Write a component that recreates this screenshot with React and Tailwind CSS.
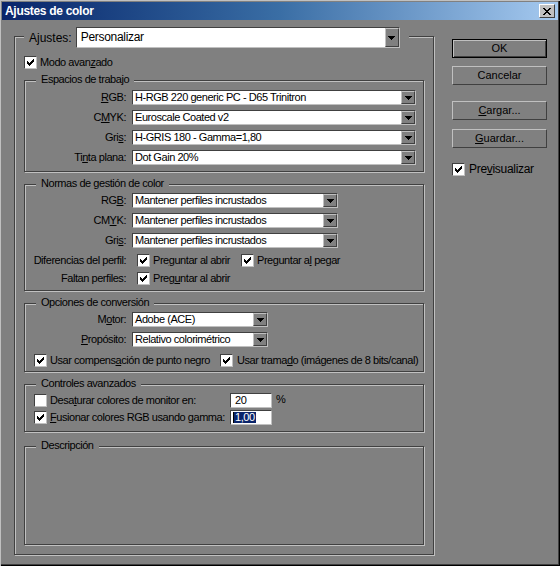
import React from 'react';

const sunken =
  'border border-t-[#404040] border-l-[#404040] border-b-[#c0c0c0] border-r-[#c0c0c0]';
const raised =
  'border border-t-[#c0c0c0] border-l-[#c0c0c0] border-b-[#404040] border-r-[#404040]';
const frame =
  'relative border border-[#404040] shadow-[inset_1px_1px_0_#c0c0c0,1px_1px_0_#c0c0c0]';

function Tri() {
  return (
    <svg width="7" height="4" viewBox="0 0 7 4" shapeRendering="crispEdges">
      <path d="M0 0H7V1H6V2H5V3H4V4H3V3H2V2H1V1H0Z" fill="#000" />
    </svg>
  );
}

function Arrow() {
  return (
    <div className={`${raised} bg-[#808080] w-[14px] h-full flex items-center justify-center shrink-0`}>
      <Tri />
    </div>
  );
}

function Select({ className, text }) {
  return (
    <div className={`${sunken} bg-white flex items-stretch h-[15px] ${className}`}>
      <div className="flex-1 pl-[2px] leading-[13px] whitespace-nowrap overflow-hidden">{text}</div>
      <Arrow />
    </div>
  );
}

function Check({ checked = true }) {
  return (
    <span className={`${sunken} bg-white w-[13px] h-[13px] shrink-0 flex items-center justify-center`}>
      {checked && (
        <svg width="7" height="7" viewBox="0 0 7 7" shapeRendering="crispEdges">
          <path
            d="M0 2h1v3h-1z M1 3h1v3h-1z M2 4h1v3h-1z M3 3h1v3h-1z M4 2h1v3h-1z M5 1h1v3h-1z M6 0h1v3h-1z"
            fill="#000"
          />
        </svg>
      )}
    </span>
  );
}

function Group({ title, className, children }) {
  return (
    <div className={`${frame} ${className}`}>
      <span className="absolute left-[11px] top-[-8px] px-[5px] bg-[#808080] leading-[13px] whitespace-nowrap">
        {title}
      </span>
      {children}
    </div>
  );
}

function Row({ label, children, className = '' }) {
  return (
    <div className={`flex items-center ${className}`}>
      <div className="w-[101px] text-right whitespace-nowrap leading-[13px]">{label}</div>
      {children}
    </div>
  );
}

function Button({ children, def, className = '' }) {
  return (
    <div
      className={`w-[95px] h-[19px] ${
        def
          ? 'border border-black shadow-[inset_1px_1px_0_#c0c0c0,inset_-1px_-1px_0_#404040]'
          : raised
      } flex items-center justify-center tracking-normal leading-[13px] ${className}`}
    >
      {children}
    </div>
  );
}

export default function App() {
  return (
    <div className="w-[560px] h-[566px] bg-[#808080] p-[2px] flex flex-col text-black text-[11px] tracking-[-0.45px] font-['Liberation_Sans',Arial,sans-serif] shadow-[inset_1px_1px_0_#c0c0c0,inset_-1px_-1px_0_#000,inset_-2px_-2px_0_#404040]">
      {/* Title bar */}
      <div className="h-[18px] flex items-center justify-between pl-[3px] pr-[3px] bg-linear-to-r from-[#0a246a] via-[#3a6ea5] to-[#a6caf0]">
        <span className="text-white font-bold text-[12px] tracking-[-0.3px] leading-[14px]">Ajustes de color</span>
        <div className="w-[16px] h-[14px] bg-[#c0c0c0] border border-t-white border-l-white border-b-[#404040] border-r-[#404040] flex items-center justify-center">
          <svg width="8" height="7" viewBox="0 0 8 7" shapeRendering="crispEdges">
            <path
              d="M0 0h2v1h-2z M6 0h2v1h-2z M1 1h2v1h-2z M5 1h2v1h-2z M2 2h4v1h-4z M3 3h2v1h-2z M2 4h4v1h-4z M1 5h2v1h-2z M5 5h2v1h-2z M0 6h2v1h-2z M6 6h2v1h-2z"
              fill="#000"
            />
          </svg>
        </div>
      </div>

      {/* Body */}
      <div className="flex items-start pl-[12px] pt-[16px]">
        {/* Ajustes frame */}
        <div className={`${frame} w-[420px] h-[519px] flex flex-col`}>
          <div className="-mt-[10px] ml-[9px] pl-[5px] pr-[9px] bg-[#808080] flex items-center self-start h-[21px]">
            <span className="text-[12px] tracking-normal leading-[14px]">Ajustes:</span>
            <div className={`${sunken} ml-[4px] w-[324px] h-[21px] bg-white flex items-stretch`}>
              <div className="flex-1 pl-[4px] text-[12px] tracking-[-0.3px] leading-[19px]">Personalizar</div>
              <Arrow />
            </div>
          </div>

          <div className="mt-[8px] ml-[9px] flex items-center gap-[3px] h-[13px]">
            <Check />
            <span className="leading-[13px]">
              Modo avan<u>z</u>ado
            </span>
          </div>

          <div className="mx-[9px] flex flex-col flex-1">
            {/* Espacios de trabajo */}
            <Group title="Espacios de trabajo" className="mt-[11px] h-[92px] pt-[9px] flex flex-col gap-[5px]">
              <Row label={<><u>R</u>GB:</>}>
                <Select className="ml-[6px] w-[284px]" text="H-RGB 220 generic PC - D65 Trinitron" />
              </Row>
              <Row label={<>C<u>M</u>YK:</>}>
                <Select className="ml-[6px] w-[284px]" text="Euroscale Coated v2" />
              </Row>
              <Row label={<>Gri<u>s</u>:</>}>
                <Select className="ml-[6px] w-[284px]" text="H-GRIS 180 - Gamma=1,80" />
              </Row>
              <Row label={<>Ti<u>n</u>ta plana:</>}>
                <Select className="ml-[6px] w-[284px]" text="Dot Gain 20%" />
              </Row>
            </Group>

            {/* Normas */}
            <Group title="Normas de gestión de color" className="mt-[12px] h-[107px] pt-[8px] flex flex-col">
              <Row label={<>RG<u>B</u>:</>}>
                <Select className="ml-[6px] w-[206px]" text="Mantener perfiles incrustados" />
              </Row>
              <Row label={<>CM<u>Y</u>K:</>} className="mt-[5px]">
                <Select className="ml-[6px] w-[206px]" text="Mantener perfiles incrustados" />
              </Row>
              <Row label={<>Gri<u>s</u>:</>} className="mt-[5px]">
                <Select className="ml-[6px] w-[206px]" text="Mantener perfiles incrustados" />
              </Row>
              <Row label="Diferencias del perfil:" className="mt-[6px] h-[13px]">
                <div className="ml-[11px] w-[104px] flex items-center gap-[3px]">
                  <Check />
                  <span className="whitespace-nowrap leading-[13px]">
                    Pre<u>g</u>untar al abrir
                  </span>
                </div>
                <div className="flex items-center gap-[3px]">
                  <Check />
                  <span className="whitespace-nowrap leading-[13px]">
                    Preguntar a<u>l</u> pegar
                  </span>
                </div>
              </Row>
              <Row label="Faltan perfiles:" className="mt-[5px] h-[13px]">
                <div className="ml-[11px] flex items-center gap-[3px]">
                  <Check />
                  <span className="whitespace-nowrap leading-[13px]">
                    Preg<u>u</u>ntar al abrir
                  </span>
                </div>
              </Row>
            </Group>

            {/* Opciones de conversión */}
            <Group title="Opciones de conversión" className="mt-[12px] h-[69px] pt-[8px] flex flex-col">
              <Row label={<>M<u>o</u>tor:</>}>
                <Select className="ml-[6px] w-[136px]" text="Adobe (ACE)" />
              </Row>
              <Row label={<><u>P</u>ropósito:</>} className="mt-[5px]">
                <Select className="ml-[6px] w-[136px]" text="Relativo colorimétrico" />
              </Row>
              <div className="mt-[7px] ml-[9px] flex items-center h-[13px]">
                <div className="w-[186px] flex items-center gap-[3px]">
                  <Check />
                  <span className="whitespace-nowrap leading-[13px]">
                    Usar compens<u>a</u>ción de punto negro
                  </span>
                </div>
                <div className="flex items-center gap-[4px]">
                  <Check />
                  <span className="whitespace-nowrap leading-[13px]">
                    Usar trama<u>d</u>o (imágenes de 8 bits/canal)
                  </span>
                </div>
              </div>
            </Group>

            {/* Controles avanzados */}
            <Group title="Controles avanzados" className="mt-[12px] h-[48px] pt-[8px] flex flex-col">
              <div className="ml-[9px] flex items-center h-[15px]">
                <Check checked={false} />
                <span className="ml-[3px] w-[180px] whitespace-nowrap leading-[13px]">
                  Desa<u>t</u>urar colores de monitor en:
                </span>
                <div className={`${sunken} w-[42px] h-[15px] bg-white pl-[4px] leading-[13px]`}>20</div>
                <span className="ml-[4px] -mt-[3px] leading-[13px]">%</span>
              </div>
              <div className="mt-[2px] ml-[9px] flex items-center h-[15px]">
                <Check />
                <span className="ml-[3px] w-[180px] whitespace-nowrap leading-[13px]">
                  <u>F</u>usionar colores RGB usando gamma:
                </span>
                <div className={`${sunken} w-[42px] h-[15px] bg-white pl-[2px] flex items-center`}>
                  <span className="w-[1px] h-[11px] bg-black" />
                  <span className="bg-[#0a246a] text-white px-[1px] leading-[11px]">1,00</span>
                </div>
              </div>
            </Group>

            {/* Descripción */}
            <Group title="Descripción" className="mt-[14px] mb-[9px] flex-1" />
          </div>
        </div>

        {/* Right column */}
        <div className="ml-[18px] mt-[3px] flex flex-col">
          <Button def>OK</Button>
          <Button className="mt-[8px]">Cancelar</Button>
          <Button className="mt-[16px]">
            <span>
              <u>C</u>argar...
            </span>
          </Button>
          <Button className="mt-[9px]">
            <span>
              <u>G</u>uardar...
            </span>
          </Button>
          <div className="mt-[15px] flex items-center gap-[4px] h-[13px]">
            <Check />
            <span className="leading-[13px] text-[12px] tracking-[-0.3px]">
              Pre<u>v</u>isualizar
            </span>
          </div>
        </div>
      </div>
    </div>
  );
}
